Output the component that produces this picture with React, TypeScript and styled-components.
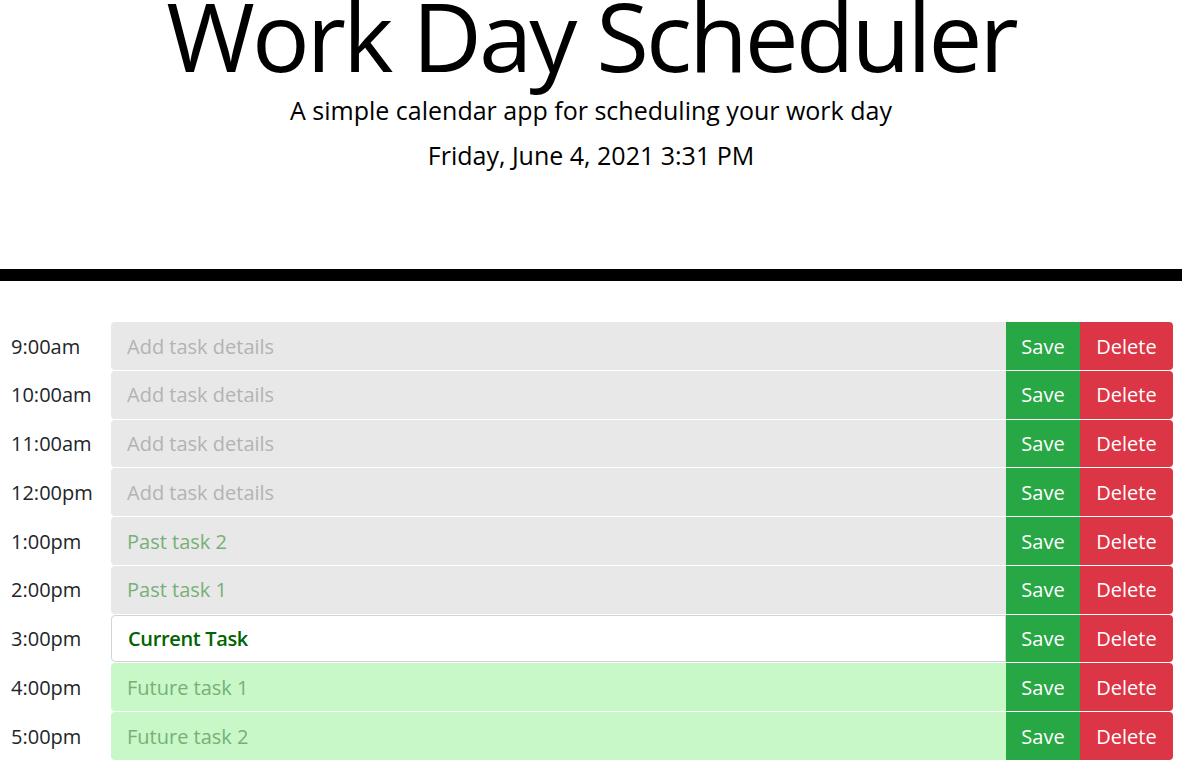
import React from "react";
import styled, { createGlobalStyle } from "styled-components";

const Global = createGlobalStyle`
  html, body { margin: 0; padding: 0; background: #fff; }
  body { font-family: "Open Sans", "Noto Sans", sans-serif; color: #212529; overflow: hidden; }
  * { box-sizing: border-box; }
`;

const Header = styled.header`
  text-align: center;
  border-bottom: 12px solid #000;
  padding-bottom: 95px;
`;

const Title = styled.h1`
  margin: -23px 0 0;
  font-size: 96px;
  font-weight: 400;
  line-height: 1.2;
  letter-spacing: -3px;
  color: #000;
`;

const Lead = styled.p`
  margin: 0;
  font-size: 25px;
  font-weight: 400;
  line-height: 1.5;
  color: #000;
`;

const DateLine = styled.p`
  margin: 7px 0 0;
  font-size: 25px;
  line-height: 1.5;
  color: #000;
`;

const List = styled.div`
  display: flex;
  flex-direction: column;
  gap: 1px;
  padding: 41px 9px 0 0;
`;

const Row = styled.div`
  display: grid;
  grid-template-columns: 111px 1fr 74px 93px;
  height: 47.75px;
`;

const Hour = styled.div`
  display: flex;
  align-items: center;
  padding-left: 11px;
  font-size: 20px;
  color: #212529;
`;

type Status = "past" | "present" | "future";

const Task = styled.div<{ $status: Status; $empty?: boolean }>`
  display: flex;
  align-items: center;
  padding-left: 16px;
  font-size: 20px;
  border-radius: 4px 0 0 4px;
  background: ${(p) =>
    p.$status === "past" ? "#e8e8e8" : p.$status === "future" ? "#c8f7c8" : "#fff"};
  border: ${(p) => (p.$status === "present" ? "1px solid #ced4da" : "none")};
  color: ${(p) =>
    p.$empty ? "#b3b3b3" : p.$status === "present" ? "#006400" : "#77b077"};
  font-weight: ${(p) => (p.$status === "present" ? 600 : 400)};
  letter-spacing: ${(p) => (p.$status === "present" ? "-0.35px" : "normal")};
`;

const Btn = styled.button<{ $kind: "save" | "delete" }>`
  border: none;
  margin: 0;
  padding: 0;
  font-family: inherit;
  font-size: 20px;
  color: #fff;
  background: ${(p) => (p.$kind === "save" ? "#28a745" : "#dc3545")};
  border-radius: ${(p) => (p.$kind === "delete" ? "0 4px 4px 0" : "0")};
  cursor: pointer;
`;

const rows: { hour: string; status: Status; text: string }[] = [
  { hour: "9:00am", status: "past", text: "" },
  { hour: "10:00am", status: "past", text: "" },
  { hour: "11:00am", status: "past", text: "" },
  { hour: "12:00pm", status: "past", text: "" },
  { hour: "1:00pm", status: "past", text: "Past task 2" },
  { hour: "2:00pm", status: "past", text: "Past task 1" },
  { hour: "3:00pm", status: "present", text: "Current Task" },
  { hour: "4:00pm", status: "future", text: "Future task 1" },
  { hour: "5:00pm", status: "future", text: "Future task 2" },
];

export default function App() {
  return (
    <>
      <Global />
      <Header>
        <Title>Work Day Scheduler</Title>
        <Lead>A simple calendar app for scheduling your work day</Lead>
        <DateLine>Friday, June 4, 2021 3:31 PM</DateLine>
      </Header>
      <List>
        {rows.map((r) => (
          <Row key={r.hour}>
            <Hour>{r.hour}</Hour>
            <Task $status={r.status} $empty={!r.text}>
              {r.text || "Add task details"}
            </Task>
            <Btn $kind="save">Save</Btn>
            <Btn $kind="delete">Delete</Btn>
          </Row>
        ))}
      </List>
    </>
  );
}
